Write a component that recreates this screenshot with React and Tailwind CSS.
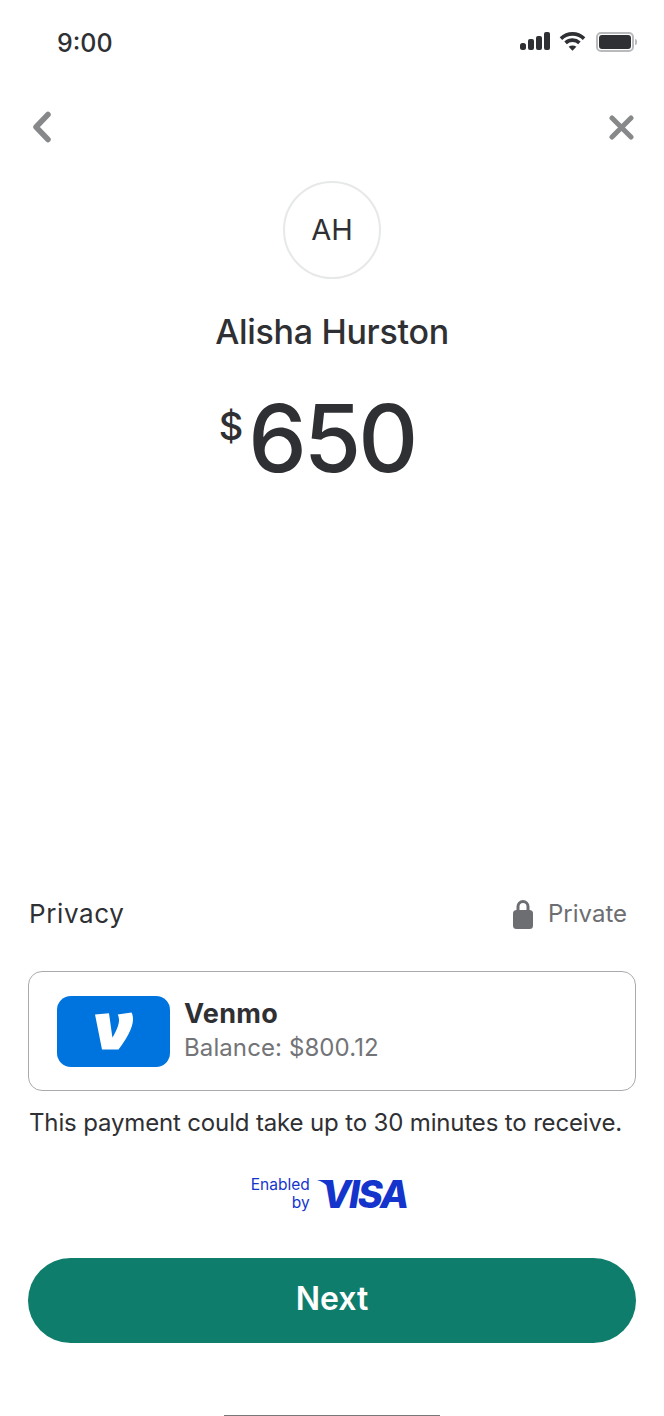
import React from "react";

const inter = "font-['Inter','Liberation_Sans',sans-serif]";

function StatusIcons() {
  return (
    <div className="flex items-center">
      {/* signal */}
      <svg className="-mt-[2px]" width="30" height="18" viewBox="0 0 30 18" fill="#2f3033">
        <rect x="0" y="11" width="6" height="7" rx="2.5" />
        <rect x="8" y="7" width="6" height="11" rx="2" />
        <rect x="16" y="4" width="6" height="14" rx="2" />
        <rect x="24" y="0" width="6" height="18" rx="2" />
      </svg>
      {/* wifi */}
      <svg className="ml-[9px] -mt-[2px]" width="27" height="20" viewBox="0 0 28 20" fill="none" stroke="#2f3033" strokeWidth="3.8">
        <path d="M2 7.5C9 1 19 1 26 7.5" />
        <path d="M6.8 12C11 8.2 17 8.2 21.2 12" />
        <path d="M10 16L14 20L18 16C15.7 14.2 12.3 14.2 10 16Z" fill="#2f3033" stroke="none" />
      </svg>
      {/* battery */}
      <div className="ml-[10px] flex items-center gap-[1px]">
        <div className="w-[38px] h-[20px] rounded-[5px] border-2 border-[#b9babc] p-[1px]">
          <div className="w-full h-full rounded-[3px] bg-[#2f3033]" />
        </div>
        <div className="w-[2px] h-[6px] rounded-r-full bg-[#b9babc]" />
      </div>
    </div>
  );
}

function VenmoLogo() {
  return (
    <div className="w-[113px] h-[71px] rounded-[14px] bg-[#0074de] flex items-center justify-center shrink-0">
      <svg width="38" height="38" viewBox="0 0 38 38">
        <path
          d="M36.5 0.5C37.6 2.6 38 4.6 38 7.4C38 16.4 30 29 23.5 37.5H7L0 2.4L14 1.2L17.4 25.5C20.5 20.6 24 13.4 24 8.4C24 5.6 23.4 3.8 22.7 2.6Z"
          fill="#fff"
        />
      </svg>
    </div>
  );
}

export default function App() {
  return (
    <div className={`${inter} w-[664px] h-[1416px] bg-white text-[#2f3033] flex flex-col overflow-hidden`}>
      {/* status bar */}
      <div className="h-[84px] pl-[57px] pr-[27px] flex items-center justify-between shrink-0">
        <span className="text-[25px] leading-[30px] font-medium mt-[1px]">9:00</span>
        <StatusIcons />
      </div>

      {/* back / close */}
      <div className="h-[86px] pl-[30px] pr-[30px] flex items-center justify-between shrink-0">
        <svg width="24" height="32" viewBox="0 0 24 32" fill="none" stroke="#87888a" strokeWidth="5.5" strokeLinecap="round" strokeLinejoin="round">
          <path d="M18 3.5L6 16L18 28.5" />
        </svg>
        <svg className="mt-[1px]" width="25" height="25" viewBox="0 0 25 25" fill="none" stroke="#87888a" strokeWidth="5" strokeLinecap="round">
          <path d="M3 3L22 22M22 3L3 22" />
        </svg>
      </div>

      {/* recipient */}
      <div className="mt-[11px] flex flex-col items-center shrink-0">
        <div className="w-[98px] h-[98px] rounded-full border-2 border-[#e6e9e8] flex items-center justify-center text-[29px]">
          AH
        </div>
        <div className="mt-[32px] text-[34px] leading-[42px] font-medium tracking-[-0.3px]">Alisha Hurston</div>
        <div className="mt-[30px] pr-[30px] flex items-start">
          <span className="text-[38px] leading-[48px] font-medium mt-[19px] mr-[5px]">$</span>
          <span className="text-[93px] leading-[110px] font-[450] tracking-[-3px]">650</span>
        </div>
      </div>

      {/* privacy row */}
      <div className="mt-auto pl-[29px] pr-[37px] flex items-center justify-between">
        <span className="text-[26px] leading-[34px] tracking-[0.6px]">Privacy</span>
        <div className="flex items-center gap-[15px] text-[#6d6e71]">
          <svg width="20" height="30" viewBox="0 0 20 30" fill="#6d6e71">
            <path d="M5 13V7.5a5 5 0 0 1 10 0V13" fill="none" stroke="#6d6e71" strokeWidth="3" />
            <rect x="0" y="11" width="20" height="19" rx="3.5" />
          </svg>
          <span className="text-[24px] leading-[34px]">Private</span>
        </div>
      </div>

      {/* payment method */}
      <div className="mt-[40px] mx-[28px] h-[120px] rounded-[14px] border border-[#a9aaad] pl-[28px] flex items-center gap-[14px]">
        <VenmoLogo />
        <div className="flex flex-col">
          <span className="text-[27px] leading-[34px] font-bold tracking-[0.3px]">Venmo</span>
          <span className="text-[24px] leading-[34px] tracking-[0.1px] text-[#737477]">Balance: $800.12</span>
        </div>
      </div>
      <p className="mt-[15px] ml-[29px] text-[24px] leading-[34px] tracking-[-0.15px] whitespace-nowrap">
        This payment could take up to 30 minutes to receive.
      </p>

      {/* network badge */}
      <div className="mt-[35px] pr-[6px] flex items-center justify-center text-[#1434cb]">
        <div className="flex flex-col items-end text-[15.5px] leading-[18px]">
          <span>Enabled</span>
          <span>by</span>
        </div>
        <svg className="ml-[7px] -mr-[7px] mb-[20px]" width="12" height="8" viewBox="0 0 12 8" fill="#1434cb">
          <path d="M0 0H12V8C9 4 5 1.5 0 0Z" />
        </svg>
        <span className="text-[38px] leading-[38px] font-extrabold italic tracking-[-2px]">VISA</span>
      </div>

      <button className="mt-[45px] mx-[28px] h-[85px] rounded-full bg-[#0f7d6c] text-white text-[32px] font-semibold pb-[3px] shrink-0">
        Next
      </button>

      {/* home indicator */}
      <div className="mt-[72px] mx-auto w-[216px] h-px bg-[#77787a] shrink-0" />
    </div>
  );
}
